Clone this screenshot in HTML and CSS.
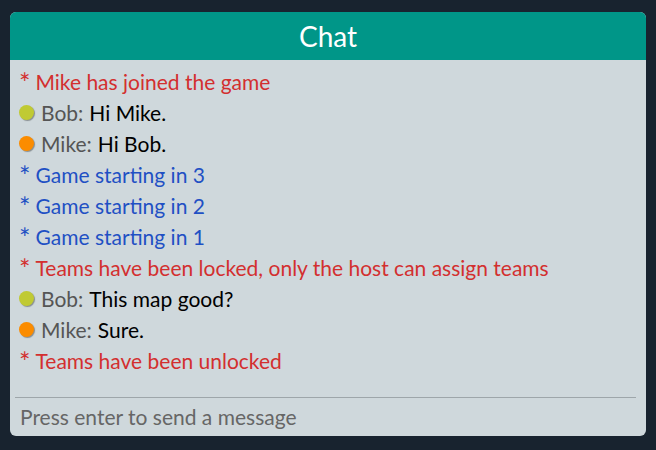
FILE: index.html
```html
<!DOCTYPE html>
<html>
<head>
<meta charset="utf-8">
<link rel="stylesheet" href="styles.css">
</head>
<body>
<div class="chat">
  <div class="chat-header">Chat</div>
  <div class="chat-log">
    <div class="line red"><span class="star">*</span>Mike has joined the game</div>
    <div class="line"><span class="dot lime"></span><span class="name">Bob:</span><span class="msg">Hi Mike.</span></div>
    <div class="line"><span class="dot orange"></span><span class="name">Mike:</span><span class="msg">Hi Bob.</span></div>
    <div class="line blue"><span class="star">*</span>Game starting in 3</div>
    <div class="line blue"><span class="star">*</span>Game starting in 2</div>
    <div class="line blue"><span class="star">*</span>Game starting in 1</div>
    <div class="line red"><span class="star">*</span>Teams have been locked, only the host can assign teams</div>
    <div class="line"><span class="dot lime"></span><span class="name">Bob:</span><span class="msg">This map good?</span></div>
    <div class="line"><span class="dot orange"></span><span class="name">Mike:</span><span class="msg">Sure.</span></div>
    <div class="line red"><span class="star">*</span>Teams have been unlocked</div>
  </div>
  <div class="chat-input">Press enter to send a message</div>
</div>
</body>
</html>
```
FILE: styles.css
```css
html, body {
  margin: 0;
  padding: 0;
  background: #18232f;
}
body {
  padding: 12px 10px 14px 10px;
  font-family: "Lato", "Noto Sans", sans-serif;
}
.chat {
  background: #cfd8dc;
  border-radius: 6px;
  overflow: hidden;
  height: 424px;
  display: flex;
  flex-direction: column;
}
.chat-header {
  background: #009688;
  color: #fff;
  height: 48px;
  line-height: 48px;
  text-align: center;
  font-size: 28px;
}
.chat-log {
  flex: 1;
  padding: 6px 9px 0 9px;
  font-size: 21px;
}
.line {
  height: 31px;
  line-height: 31px;
  display: flex;
  align-items: center;
  white-space: pre;
}
.star {
  font-size: 27px;
  line-height: 31px;
  margin-right: 5px;
  position: relative;
  top: 1px;
}
.red { color: #d32f2f; }
.blue { color: #1f50c4; }
.dot {
  width: 15px;
  height: 15px;
  border-radius: 50%;
  margin-right: 7px;
  box-shadow: 1px 1px 1px rgba(0,0,0,0.35);
}
.lime { background: #c0ca33; }
.orange { background: #fb8c00; }
.name { color: #555; margin-right: 6px; }
.msg { color: #000; }
.chat-input {
  margin: 0 10px 0 5px;
  border-top: 1px solid #9ea6aa;
  height: 38px;
  line-height: 38px;
  padding-left: 5px;
  color: #666;
  font-size: 21px;
}
```
